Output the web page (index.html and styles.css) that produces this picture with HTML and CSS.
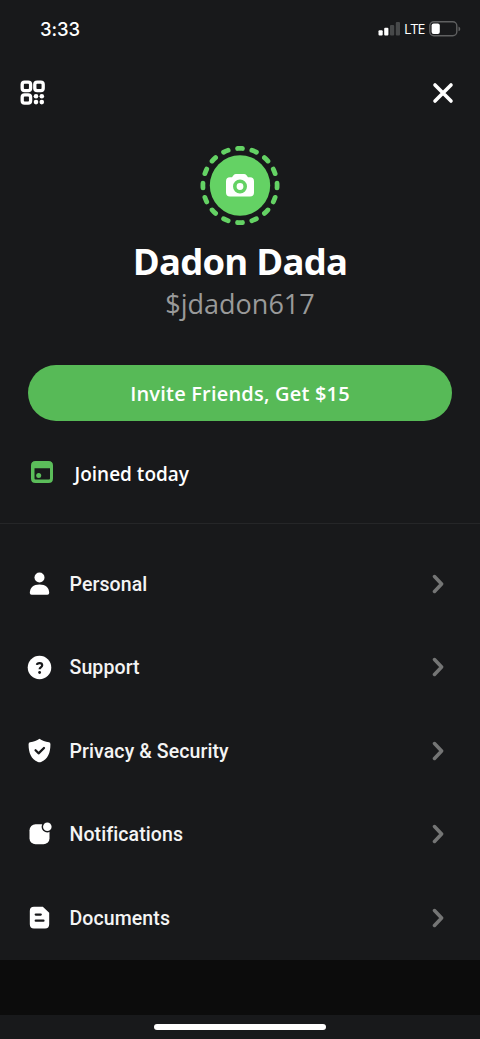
FILE: index.html
```html
<!DOCTYPE html>
<html lang="en">
<head>
<meta charset="utf-8">
<title>Profile</title>
<link rel="stylesheet" href="styles.css">
</head>
<body>
<main class="screen">
  <header class="status">
    <span class="time">3:33</span>
    <span class="indicators">
      <svg width="22" height="14" viewBox="0 0 22 14"><g fill="#fff"><rect x="0.5" y="8.2" width="4.2" height="5.4" rx="1"/><rect x="6.2" y="5.8" width="4.2" height="7.8" rx="1"/></g><g fill="#47494a"><rect x="12" y="3" width="4.2" height="10.6" rx="1"/><rect x="17.8" y="0" width="4.2" height="13.6" rx="1"/></g></svg>
      <span class="lte">LTE</span>
      <svg width="32" height="16" viewBox="0 0 32 16"><rect x="0.8" y="0.8" width="27" height="14" rx="4" fill="none" stroke="#5f6061" stroke-width="1.4"/><rect x="2.6" y="2.6" width="8.2" height="10.4" rx="2" fill="#fff"/><path d="M29.5 5.5q1.8.6 1.8 2.4t-1.8 2.4z" fill="#5f6061"/></svg>
    </span>
  </header>
  <nav class="topbar">
    <svg width="26" height="26" viewBox="0 0 26 26"><g fill="none" stroke="#fff" stroke-width="3.3"><rect x="2.2" y="2.2" width="8.4" height="8.4" rx="2.4"/><rect x="14.8" y="2.2" width="8.4" height="8.4" rx="2.4"/><rect x="2.2" y="14.8" width="8.4" height="8.4" rx="2.4"/></g><g fill="#fff"><circle cx="16" cy="16.3" r="2.3"/><circle cx="21.8" cy="16.3" r="2.3"/><circle cx="16" cy="22.1" r="2.3"/><circle cx="21.8" cy="22.1" r="2.3"/></g></svg>
    <svg width="22" height="22" viewBox="0 0 22 22"><path d="M3 3l16 16M19 3L3 19" stroke="#fff" stroke-width="3.6" stroke-linecap="round"/></svg>
  </nav>
  <section class="profile">
    <svg class="avatar" width="80" height="80" viewBox="0 0 80 80"><circle cx="40" cy="40.5" r="30.2" fill="#64d264"/><circle cx="40" cy="40.5" r="37.1" fill="none" stroke="#64d264" stroke-width="4.8" stroke-linecap="round" pathLength="160" stroke-dasharray="3.4 6.6" stroke-dashoffset="1.7"/><path d="M30 32.3h2l1.500-2.1Q34.500 28.900 36 28.900h8q1.500 0 2.500 1.300L48 32.300h2q4 0 4 4v11.200q0 4-4 4H30q-4 0-4-4V36.300q0-4 4-4z" fill="#fff"/><circle cx="40" cy="41.500" r="5.200" fill="none" stroke="#64d264" stroke-width="3.600"/></svg>
    <h1 class="name">Dadon Dada</h1>
    <p class="handle">$jdadon617</p>
    <button class="invite">Invite Friends, Get $15</button>
  </section>
  <section class="joined">
    <svg width="24" height="24" viewBox="0 0 24 24"><path fill-rule="evenodd" d="M5.500 1h13Q23 1 23 5.500v13Q23 23 18.500 23h-13Q1 23 1 18.500v-13Q1 1 5.500 1zM4.500 8.300V18.500q0 1 1 1h13.500q1 0 1-1V8.300z" fill="#5bbd5a"/><circle cx="8.700" cy="15.400" r="2.500" fill="#5bbd5a"/></svg>
    <span class="joined-text">Joined today</span>
  </section>
  <ul class="menu">
    <li class="row"><svg class="icon" viewBox="0 0 24 24"><circle cx="12" cy="6.200" r="4.800" fill="#fff"/><path d="M2.700 21.200C2.700 16 6 12.900 12 12.900s9.300 3.100 9.300 8.300q0 1.500-1.700 1.500H4.400q-1.700 0-1.700-1.500z" fill="#fff"/></svg><span class="label">Personal</span><svg class="chevron" viewBox="0 0 12 20"><path d="M2.500 2.500L9.600 10l-7.100 7.500"/></svg></li>
    <li class="row"><svg class="icon" viewBox="0 0 24 24"><circle cx="12" cy="12" r="11.300" fill="#fff"/><path d="M9.500 9.400C9.800 7.300 14.600 7 14.600 9.900c0 2-2.500 2-2.500 3.800" fill="none" stroke="#18191b" stroke-width="2.100"/><circle cx="12.100" cy="16.800" r="1.350" fill="#18191b"/></svg><span class="label">Support</span><svg class="chevron" viewBox="0 0 12 20"><path d="M2.500 2.500L9.600 10l-7.100 7.500"/></svg></li>
    <li class="row"><svg class="icon" viewBox="0 0 24 24"><path d="M12 .7C14.500 2.400 17.500 3.500 21 4q1.500.2 1.500 1.900C22.500 14.500 20 20 13.500 23q-1.500.7-3 0C4 20 1.500 14.500 1.500 5.900Q1.500 4.200 3 4C6.500 3.500 9.500 2.400 12 .7z" fill="#fff"/><path d="M8.200 11.800l2.900 2.900 5.200-5.100" fill="none" stroke="#18191b" stroke-width="2.200" stroke-linecap="round" stroke-linejoin="round"/></svg><span class="label">Privacy &amp; Security</span><svg class="chevron" viewBox="0 0 12 20"><path d="M2.500 2.500L9.600 10l-7.100 7.500"/></svg></li>
    <li class="row"><svg class="icon" viewBox="0 0 24 24"><rect x="2.400" y="2.200" width="19.200" height="19.200" rx="5.800" fill="#fff"/><circle cx="19.500" cy="4.500" r="5.500" fill="#18191b"/><circle cx="19.500" cy="4.500" r="4.100" fill="#fff"/></svg><span class="label">Notifications</span><svg class="chevron" viewBox="0 0 12 20"><path d="M2.500 2.500L9.600 10l-7.100 7.500"/></svg></li>
    <li class="row"><svg class="icon" viewBox="0 0 24 24"><path d="M6.500 1.700h8.700L21.300 7.500v11q0 4-4 4H6.700q-4 0-4-4V5.700q0-4 4-4z" fill="#fff"/><path d="M8.400 9.200h4.800M8.400 15h7.400" stroke="#18191b" stroke-width="2.200" stroke-linecap="round"/></svg><span class="label">Documents</span><svg class="chevron" viewBox="0 0 12 20"><path d="M2.500 2.500L9.600 10l-7.100 7.500"/></svg></li>
  </ul>
  <div class="band"></div>
  <footer class="home"><div class="home-bar"></div></footer>
</main>
</body>
</html>
```
FILE: styles.css
```css
* { box-sizing: border-box; margin: 0; padding: 0; }
body { background: #18191b; color: #fff; font-family: "Open Sans", "Noto Sans", sans-serif; }
svg { display: block; flex: none; }
.screen { width: 480px; height: 1039px; display: flex; flex-direction: column; overflow: hidden; }
.status { height: 58px; flex: none; display: flex; justify-content: space-between; align-items: center; padding: 0 19px 0 40px; }
.time { font: 500 18.5px/24px Inter, sans-serif; letter-spacing: -0.1px; }
.indicators { display: flex; align-items: center; gap: 4px; }
.lte { font: 500 14px/20px "Open Sans", sans-serif; width: 21px; letter-spacing: -0.7px; }
.topbar { height: 70px; flex: none; display: flex; justify-content: space-between; align-items: center; padding: 0 26px 0 20px; }
.profile { height: 293px; flex: none; display: flex; flex-direction: column; align-items: center; padding-top: 17px; }
.name { font-size: 36.5px; line-height: 44px; font-weight: 700; margin-top: 14px; letter-spacing: -0.8px; white-space: nowrap; }
.handle { font-size: 27px; line-height: 36px; color: #999a9a; margin-top: 3px; }
.invite { width: 424px; height: 56px; flex: none; margin-top: 43px; padding-top: 1px; border: 0; border-radius: 28px; background: #57ba57; color: #fff; font: 600 20px/55px "Open Sans", sans-serif; letter-spacing: 0.2px; }
.joined { height: 103px; flex: none; display: flex; align-items: center; gap: 21px; padding: 0 0 1px 29.5px; border-bottom: 1px solid #252628; }
.joined-text { font-size: 19px; font-weight: 600; padding-top: 4px; }
.menu { height: 435.5px; flex: none; list-style: none; padding-top: 18px; }
.row { height: 83.5px; display: flex; align-items: center; padding: 0 36px 0 27px; }
.icon { width: 25px; height: 25px; }
.label { flex: 1; margin-left: 17.5px; padding-top: 2px; font: 500 19.5px/26px Roboto, sans-serif; letter-spacing: 0.1px; color: #f4f4f4; }
.chevron { width: 12px; height: 20px; fill: none; stroke: #747575; stroke-width: 3.5; stroke-linecap: round; stroke-linejoin: round; }
.band { height: 55.5px; flex: none; background: #0c0c0c; }
.home { flex: 1; display: flex; justify-content: center; padding-top: 9px; }
.home-bar { width: 172px; height: 6px; border-radius: 3px; background: #fff; }
```
